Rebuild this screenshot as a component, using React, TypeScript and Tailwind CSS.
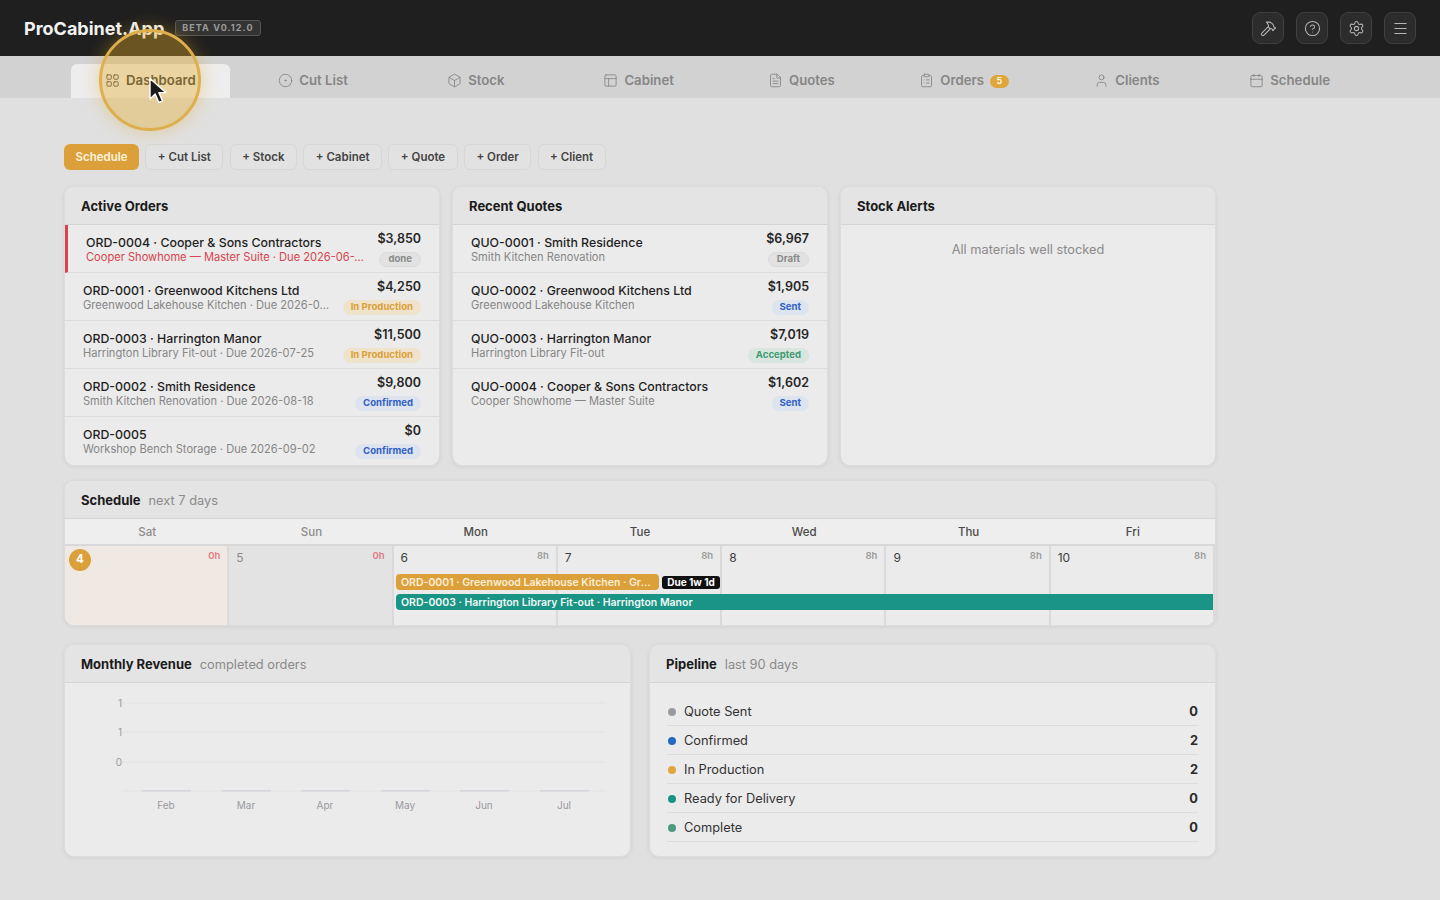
import {
  Box,
  Calendar,
  CircleDot,
  CircleHelp,
  ClipboardList,
  FileText,
  Hammer,
  LayoutGrid,
  Menu,
  PanelsTopLeft,
  Settings,
  User,
  type LucideIcon,
} from "lucide-react";
import type { ReactNode } from "react";

type Tone = "gray" | "amber" | "blue" | "green";

const TABS: { label: string; icon: LucideIcon; badge?: string }[] = [
  { label: "Dashboard", icon: LayoutGrid },
  { label: "Cut List", icon: CircleDot },
  { label: "Stock", icon: Box },
  { label: "Cabinet", icon: PanelsTopLeft },
  { label: "Quotes", icon: FileText },
  { label: "Orders", icon: ClipboardList, badge: "5" },
  { label: "Clients", icon: User },
  { label: "Schedule", icon: Calendar },
];

const ACTIONS = ["+ Cut List", "+ Stock", "+ Cabinet", "+ Quote", "+ Order", "+ Client"];

const ORDERS: { title: string; sub: string; amount: string; status: string; tone: Tone; late?: boolean }[] = [
  { title: "ORD-0004 · Cooper & Sons Contractors", sub: "Cooper Showhome — Master Suite · Due 2026-06-28", amount: "$3,850", status: "done", tone: "gray", late: true },
  { title: "ORD-0001 · Greenwood Kitchens Ltd", sub: "Greenwood Lakehouse Kitchen · Due 2026-07-12", amount: "$4,250", status: "In Production", tone: "amber" },
  { title: "ORD-0003 · Harrington Manor", sub: "Harrington Library Fit-out · Due 2026-07-25", amount: "$11,500", status: "In Production", tone: "amber" },
  { title: "ORD-0002 · Smith Residence", sub: "Smith Kitchen Renovation · Due 2026-08-18", amount: "$9,800", status: "Confirmed", tone: "blue" },
  { title: "ORD-0005", sub: "Workshop Bench Storage · Due 2026-09-02", amount: "$0", status: "Confirmed", tone: "blue" },
];

const QUOTES: { title: string; sub: string; amount: string; status: string; tone: Tone }[] = [
  { title: "QUO-0001 · Smith Residence", sub: "Smith Kitchen Renovation", amount: "$6,967", status: "Draft", tone: "gray" },
  { title: "QUO-0002 · Greenwood Kitchens Ltd", sub: "Greenwood Lakehouse Kitchen", amount: "$1,905", status: "Sent", tone: "blue" },
  { title: "QUO-0003 · Harrington Manor", sub: "Harrington Library Fit-out", amount: "$7,019", status: "Accepted", tone: "green" },
  { title: "QUO-0004 · Cooper & Sons Contractors", sub: "Cooper Showhome — Master Suite", amount: "$1,602", status: "Sent", tone: "blue" },
];

const DAYS = [
  { name: "Sat", num: "4", hours: "0h", off: true, today: true },
  { name: "Sun", num: "5", hours: "0h", off: true },
  { name: "Mon", num: "6", hours: "8h" },
  { name: "Tue", num: "7", hours: "8h" },
  { name: "Wed", num: "8", hours: "8h" },
  { name: "Thu", num: "9", hours: "8h" },
  { name: "Fri", num: "10", hours: "8h" },
];

const PIPELINE = [
  { label: "Quote Sent", count: 0, dot: "bg-[#9a9aa2]" },
  { label: "Confirmed", count: 2, dot: "bg-[#2468c0]" },
  { label: "In Production", count: 2, dot: "bg-[#dfa63c]" },
  { label: "Ready for Delivery", count: 0, dot: "bg-[#1a9484]" },
  { label: "Complete", count: 0, dot: "bg-[#4d9a80]" },
];

const MONTHS = [
  { m: "Feb", x: 101 },
  { m: "Mar", x: 181 },
  { m: "Apr", x: 260 },
  { m: "May", x: 340 },
  { m: "Jun", x: 419 },
  { m: "Jul", x: 499 },
];

function Badge({ tone, children }: { tone: Tone; children: ReactNode }) {
  const toneClass = {
    gray: "bg-[#e2e2e2] text-[#8a8a8a] border border-[#dadada]",
    amber: "bg-[#efe3cb] text-[#dca03a]",
    blue: "bg-[#dde3ef] text-[#2f62c4]",
    green: "bg-[#d9e6df] text-[#3f9a72]",
  }[tone];
  return (
    <span className={`inline-flex h-[15px] items-center rounded-full px-2 text-[9.6px] font-bold ${toneClass}`}>
      {children}
    </span>
  );
}

function Card({ title, note, className, children }: { title: string; note?: string; className?: string; children: ReactNode }) {
  return (
    <section className={`flex flex-col overflow-hidden rounded-[10px] border border-[#dcdcdc] bg-[#ebebeb] shadow-[0_1px_4px_rgba(0,0,0,0.07)] ${className ?? ""}`}>
      <header className="flex h-[38px] shrink-0 items-center gap-2 border-b border-[#d4d4d4] bg-[#e4e4e4] px-4 pt-[2px]">
        <h2 className="text-[13px] font-bold text-[#1b1b1b]">{title}</h2>
        {note && <span className="text-[12.8px] text-[#8a8a8a]">{note}</span>}
      </header>
      {children}
    </section>
  );
}

function ListRow({ title, sub, amount, status, tone, late }: { title: string; sub: string; amount: string; status: string; tone: Tone; late?: boolean }) {
  return (
    <div className={`flex h-[48px] items-center justify-between gap-[10px] border-b border-[#dcdcdc] pr-[18px] last:border-b-transparent ${late ? "border-l-[3px] border-l-[#d8434f] pl-[18px]" : "pl-[18px]"}`}>
      <div className="min-w-0 flex-1 pt-[2px]">
        <div className="truncate text-[12.35px] font-medium leading-[15px] text-[#1f1f1f]">{title}</div>
        <div className={`truncate text-[11.1px] leading-[14px] ${late ? "text-[#d8434f]" : "text-[#868686]"}`}>{sub}</div>
      </div>
      <div className="flex shrink-0 flex-col items-end gap-[5px] pt-px">
        <span className="text-[12.5px] font-semibold leading-[16px] text-[#262626]">{amount}</span>
        <Badge tone={tone}>{status}</Badge>
      </div>
    </div>
  );
}

function ScheduleGrid() {
  return (
    <>
      <div className="grid h-[27px] grid-cols-7 items-center border-b-2 border-[#d8d8d8] bg-[#eeeeee] pt-[2px]">
        {DAYS.map((d) => (
          <div key={d.name} className={`text-center text-[11.5px] font-medium ${d.off ? "text-[#8c8c8c]" : "text-[#4a4a4a]"}`}>
            {d.name}
          </div>
        ))}
      </div>
      <div className="relative grid flex-1 grid-cols-7">
        {DAYS.map((d) => (
          <div
            key={d.num}
            className={`relative border-r-2 border-[#dadada] last:border-r-0 ${d.today ? "bg-[#f0e9e3]" : d.off ? "bg-[#e3e3e3]" : "bg-[#ebebeb]"}`}
          >
            {d.today ? (
              <span className="absolute left-[4px] top-[3px] flex h-[22px] w-[22px] items-center justify-center rounded-full bg-[#dca03a] text-[11.5px] font-bold text-white">
                {d.num}
              </span>
            ) : (
              <span className={`absolute left-[7px] top-[3px] text-[12px] ${d.off ? "text-[#8c8c8c]" : "text-[#3c3c3c]"}`}>{d.num}</span>
            )}
            <span className={`absolute right-[7px] top-[3px] text-[9.5px] font-semibold ${d.off ? "text-[#e07b80]" : "text-[#9a9a9a]"}`}>
              {d.hours}
            </span>
          </div>
        ))}
        {/* Bars sit over the day cells */}
        <div className="absolute left-[331px] top-[28px] flex h-[16px] w-[263px] items-center rounded-[4px] bg-[#dca03a] px-[5px] pt-[2px] text-[10.5px] font-semibold text-[#fbeed6]">
          <span className="truncate">ORD-0001 · Greenwood Lakehouse Kitchen · Greenwood Kitchens Ltd</span>
        </div>
        <div className="absolute left-[597px] top-[30px] flex h-[13px] w-[58px] items-center justify-center rounded-[3px] bg-[#111111] text-[10px] font-bold text-white">
          Due 1w 1d
        </div>
        <div className="absolute left-[331px] top-[48px] flex h-[16px] w-[817px] items-center rounded-l-[4px] bg-[#1a9484] px-[5px] pt-[2px] text-[10.5px] font-semibold text-[#eef8f6]">
          ORD-0003 · Harrington Library Fit-out · Harrington Manor
        </div>
      </div>
    </>
  );
}

function RevenueChart() {
  return (
    <svg width="565" height="173" viewBox="0 0 565 173" className="block">
      {[20, 49, 79, 108].map((y) => (
        <line key={y} x1="57" x2="541" y1={y} y2={y} stroke="#e3e3e3" strokeWidth="1" />
      ))}
      {[
        { v: "1", y: 24 },
        { v: "1", y: 53 },
        { v: "0", y: 83 },
      ].map((t) => (
        <text key={t.y} x="57" y={t.y} textAnchor="end" fontSize="10" fill="#9a9aa0" fontFamily="Inter, sans-serif">
          {t.v}
        </text>
      ))}
      {MONTHS.map((b) => (
        <g key={b.m}>
          <rect x={b.x - 24} y="107" width="49" height="1.5" fill="#d6d6de" />
          <text x={b.x} y="126" textAnchor="middle" fontSize="10" fill="#9a9aa0" fontFamily="Inter, sans-serif">
            {b.m}
          </text>
        </g>
      ))}
    </svg>
  );
}

function CursorHighlight() {
  return (
    <div className="pointer-events-none absolute left-[99px] top-[29px] h-[102px] w-[102px] rounded-full border-[3px] border-[#dfae4c] bg-[rgba(226,170,40,0.38)] shadow-[0_0_18px_rgba(226,170,40,0.4)]">
      <svg width="20" height="28" viewBox="0 0 20 28" className="absolute left-[46px] top-[45px]">
        <path d="M2 1.5v20.5l5.2-5 3.6 8.5 3.7-1.6-3.6-8.3h7.1z" fill="#1c1c1c" stroke="#ffffff" strokeWidth="1.4" strokeLinejoin="round" />
      </svg>
    </div>
  );
}

export default function App() {
  return (
    <div className="relative h-[900px] w-full overflow-hidden bg-[#e0e0e0] font-['Inter','Liberation_Sans',sans-serif]">
      <header className="flex h-14 items-center justify-between bg-[#1f1f1f] pl-6 pr-6">
        <div className="flex items-center gap-[11px]">
          <span className="text-[18px] font-bold text-[#f2f2f2]">ProCabinet.App</span>
          <span className="flex h-4 items-center rounded-[3px] border border-[#555555] bg-[#333333] px-[6px] text-[9px] font-bold tracking-[0.12em] text-[#9c9c9c]">
            BETA V0.12.0
          </span>
        </div>
        <div className="flex gap-3">
          {[Hammer, CircleHelp, Settings, Menu].map((Icon, i) => (
            <button key={i} type="button" className="flex h-8 w-8 items-center justify-center rounded-lg border border-[#404040] bg-[#2c2c2c] text-[#b4b4b4]">
              <Icon size={17} strokeWidth={1.5} />
            </button>
          ))}
        </div>
      </header>

      <nav className="flex h-[42px] items-end gap-1 bg-[#d2d2d2] px-[71px]">
        {TABS.map((tab, i) => {
          const Icon = tab.icon;
          return (
            <div
              key={tab.label}
              className={`flex h-[34px] flex-1 items-center justify-center gap-[6px] rounded-t-[6px] text-[13.2px] font-semibold ${i === 0 ? "bg-[#ededed] text-[#3a3a3a]" : "text-[#868686]"}`}
            >
              <Icon size={15} strokeWidth={1.4} className="-mt-[2px]" />
              <span>{tab.label}</span>
              {tab.badge && (
                <span className="flex h-[13px] w-[19px] items-center justify-center rounded-full bg-[#dfa63c] text-[9px] font-bold text-[#fdf3dd]">
                  {tab.badge}
                </span>
              )}
            </div>
          );
        })}
      </nav>

      <main className="ml-16 w-[1152px] pt-[46px]">
        <div className="flex gap-[6.3px]">
          <button type="button" className="h-[26px] rounded-[6px] bg-[#dca03a] px-[11.5px] pt-px text-[11.5px] font-semibold text-[#fdf3dd]">
            Schedule
          </button>
          {ACTIONS.map((a) => (
            <button key={a} type="button" className="h-[26px] rounded-[6px] border border-[#d7d7d7] bg-[#e2e2e2] px-[11.5px] pt-px text-[11.5px] font-semibold text-[#444444]">
              {a}
            </button>
          ))}
        </div>

        <div className="mt-4 grid h-[280px] grid-cols-3 gap-3">
          <Card title="Active Orders">
            {ORDERS.map((o) => (
              <ListRow key={o.title} {...o} />
            ))}
          </Card>
          <Card title="Recent Quotes">
            {QUOTES.map((q) => (
              <ListRow key={q.title} {...q} />
            ))}
          </Card>
          <Card title="Stock Alerts">
            <p className="pt-[15px] text-center text-[12.8px] text-[#8a8a8a]">All materials well stocked</p>
          </Card>
        </div>

        <Card title="Schedule" note="next 7 days" className="mt-[14px] h-[146px]">
          <ScheduleGrid />
        </Card>

        <div className="mt-[18px] grid h-[213px] grid-cols-2 gap-[18px]">
          <Card title="Monthly Revenue" note="completed orders">
            <RevenueChart />
          </Card>
          <Card title="Pipeline" note="last 90 days">
            <div className="px-[17px] pt-[14px]">
              {PIPELINE.map((p) => (
                <div key={p.label} className="flex h-[29px] items-center border-b border-[#dcdcdc] pt-[2px] text-[12.8px] text-[#333333]">
                  <span className={`ml-px mr-[8px] h-2 w-2 rounded-full ${p.dot}`} />
                  <span className="flex-1">{p.label}</span>
                  <span className="font-bold text-[#2a2a2a]">{p.count}</span>
                </div>
              ))}
            </div>
          </Card>
        </div>
      </main>

      <CursorHighlight />
    </div>
  );
}
